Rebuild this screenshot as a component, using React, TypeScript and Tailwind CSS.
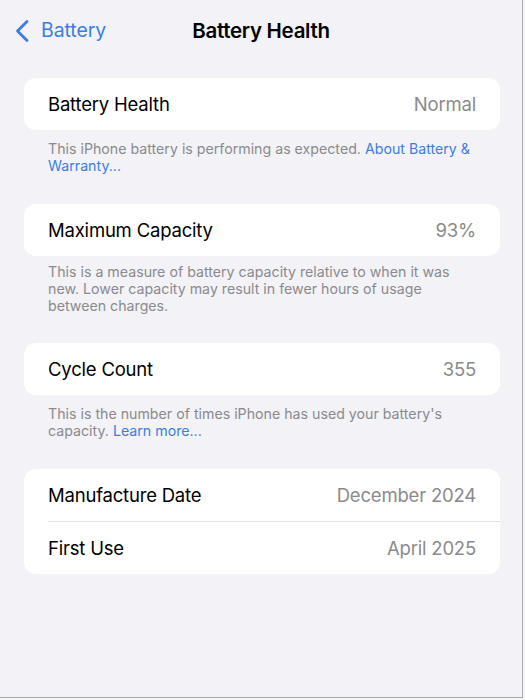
import React from "react";

const font = { fontFamily: 'Inter, "Noto Sans", sans-serif' };

function Row({ label, value }: { label: string; value: string }) {
  return (
    <div className="flex h-[52px] items-center justify-between px-6 pt-[2px]">
      <span className="text-[18.5px] tracking-[-0.2px] text-black">{label}</span>
      <span className="text-[18.5px] tracking-[-0.2px] text-[#8a8a8e]">{value}</span>
    </div>
  );
}

export default function App() {
  return (
    <div className="w-[525px] h-[700px] bg-[#f6f6f8]" style={font}>
      <div className="w-[523px] h-[698px] bg-[#f2f2f7] border-r border-b border-[#a9a9ad] overflow-hidden">
        <div className="grid grid-cols-[1fr_auto_1fr] items-center h-[62px] px-[14px]">
          <div className="flex items-center gap-[10px] text-[#3a7ee4]">
            <svg width="17" height="24" viewBox="0 0 17 24" fill="none">
              <path d="M13 2.5 L3.5 12 L13 21.5" stroke="#3a7ee4" strokeWidth="2.8" strokeLinecap="round" strokeLinejoin="round" />
            </svg>
            <span className="text-[19.5px] tracking-[-0.1px]">Battery</span>
          </div>
          <div className="text-[20.5px] font-semibold tracking-[-0.3px] text-black">Battery Health</div>
          <div />
        </div>

        <div className="ml-6 mr-[22px] mt-4">
          <div className="bg-white rounded-[12px]">
            <Row label="Battery Health" value="Normal" />
          </div>
          <p className="px-6 pt-[10px] text-[14.2px] leading-[17px] text-[#8a8a8e]">
            This iPhone battery is performing as expected. <span className="text-[#3a7ee4]">About Battery &amp; Warranty...</span>
          </p>

          <div className="bg-white rounded-[12px] mt-[30px]">
            <Row label="Maximum Capacity" value="93%" />
          </div>
          <p className="px-6 pt-[7px] text-[14.2px] leading-[17px] text-[#8a8a8e]">
            This is a measure of battery capacity relative to when it was new. Lower capacity may result in fewer hours of usage between charges.
          </p>

          <div className="bg-white rounded-[12px] mt-[29px]">
            <Row label="Cycle Count" value="355" />
          </div>
          <p className="px-6 pt-[10px] text-[14.2px] leading-[17px] text-[#8a8a8e]">
            This is the number of times iPhone has used your battery's capacity. <span className="text-[#3a7ee4]">Learn more...</span>
          </p>

          <div className="bg-white rounded-[12px] mt-[30px] overflow-hidden">
            <Row label="Manufacture Date" value="December 2024" />
            <div className="ml-6 h-px bg-[#e3e3e6]" />
            <Row label="First Use" value="April 2025" />
          </div>
        </div>
      </div>
    </div>
  );
}
